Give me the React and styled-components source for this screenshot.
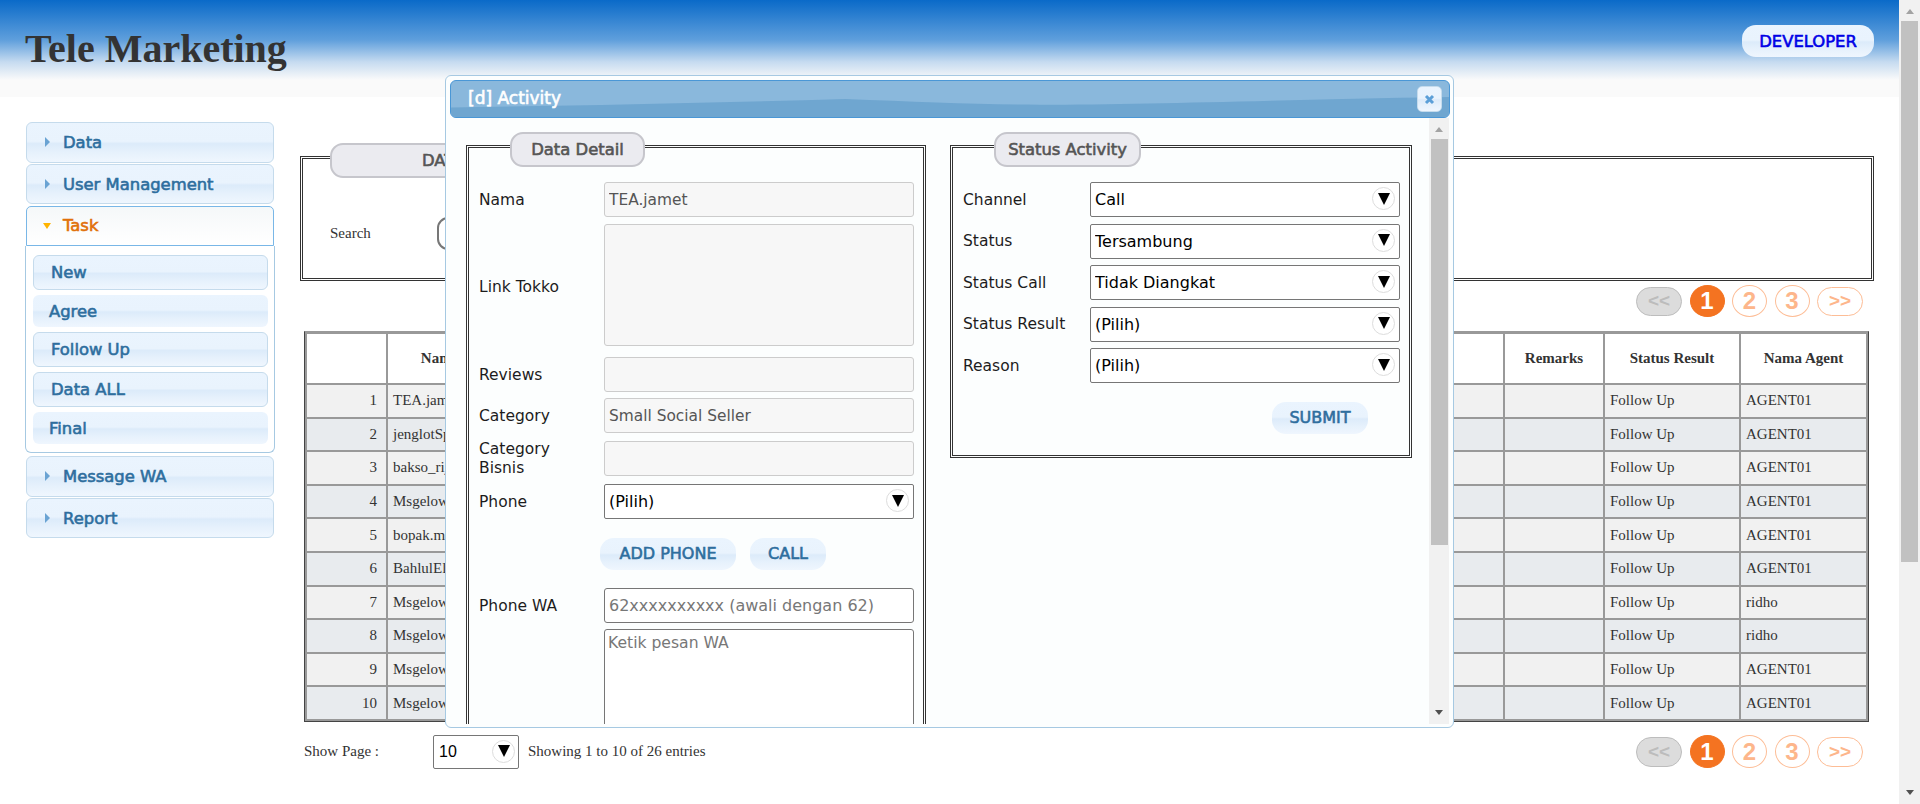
import React from "react";
import styled, { createGlobalStyle, css } from "styled-components";

const sans = `"DejaVu Sans", "Liberation Sans", sans-serif`;
const serif = `"Liberation Serif", serif`;
const blueGloss = `linear-gradient(#eaf4fe 0%, #e9f3fd 47%, #dcebfa 53%, #e6f1fc 75%, #eff6fe 100%)`;

const fauxBold = css`
  font-family: ${sans};
  font-weight: 400;
  -webkit-text-stroke: 0.6px currentColor;
`;

const Global = createGlobalStyle`
  html, body { margin: 0; padding: 0; height: 804px; overflow: hidden; background: #fff; }
  * { box-sizing: border-box; }
`;

const Viewport = styled.div`
  position: relative;
  display: flex;
  width: 1920px;
  height: 804px;
  overflow: hidden;
  font-family: ${serif};
  font-size: 15px;
  color: #333;
`;
const Page = styled.div`
  flex: 1;
  min-width: 0;
  height: 804px;
  overflow: hidden;
`;
const ScrollTrack = styled.div`
  width: ${(p) => p.$w}px;
  height: 100%;
  flex: none;
  display: flex;
  flex-direction: column;
  justify-content: space-between;
  background: #f1f1f1;
`;
const ScrollUpper = styled.div`
  display: flex;
  flex-direction: column;
`;
const ScrollButton = styled.div`
  height: 21px;
  display: flex;
  justify-content: center;
  align-items: ${(p) => (p.$down ? "flex-end" : "flex-start")};
  padding: ${(p) => (p.$down ? "0 0 9px" : "9px 0 0")};
`;
const ArrowUp = styled.span`
  width: 0;
  height: 0;
  border-left: 4.5px solid transparent;
  border-right: 4.5px solid transparent;
  border-bottom: 5px solid #a3a3a3;
`;
const ArrowDown = styled.span`
  width: 0;
  height: 0;
  border-left: 4.5px solid transparent;
  border-right: 4.5px solid transparent;
  border-top: 5px solid #505050;
`;
const ScrollThumb = styled.div`
  height: ${(p) => p.$h}px;
  margin: 0 ${(p) => p.$right}px 0 2px;
  background: #c1c1c1;
`;
const Scrollbar = ({ width, thumb, right }) => (
  <ScrollTrack $w={width}>
    <ScrollUpper>
      <ScrollButton><ArrowUp /></ScrollButton>
      <ScrollThumb $h={thumb} $right={right} />
    </ScrollUpper>
    <ScrollButton $down><ArrowDown /></ScrollButton>
  </ScrollTrack>
);

const Header = styled.header`
  height: 97px;
  display: flex;
  justify-content: space-between;
  align-items: flex-start;
  padding: 25px 25px 0;
  background: linear-gradient(#0a6ac8 0, #5f9fdc 40px, #c6dbf0 62px, #fafafa 80px, #fafafa 100%);
`;
const Title = styled.h1`
  margin: 1px 0 0;
  font: bold 40px/46px ${serif};
  color: #333;
`;
const GlossButton = styled.button`
  height: 32px;
  width: ${(p) => p.$w}px;
  padding: 0 0 ${(p) => (p.$flat ? 0 : 2)}px;
  border: 0;
  border-radius: 14px;
  background: ${blueGloss};
  ${fauxBold}
  font-size: ${(p) => p.$size || 16}px;
  color: ${(p) => p.$color || "#2e6e9e"};
  flex: none;
`;
const Main = styled.main`
  display: flex;
  align-items: flex-start;
  padding-left: 26px;
`;
const Sidebar = styled.nav`
  width: 248px;
  margin-top: 25px;
  flex: none;
`;
const AccHeader = styled.div`
  display: flex;
  align-items: center;
  height: 40.5px;
  margin-top: ${(p) => p.$top ?? 1.3}px;
  padding-left: ${(p) => (p.$active ? 16 : 18)}px;
  gap: ${(p) => (p.$active ? 12 : 13)}px;
  border: 1px solid ${(p) => (p.$active ? "#79b7e7" : "#c5dbec")};
  border-radius: ${(p) => (p.$active ? "5px 5px 0 0" : "6px")};
  background: ${(p) => (p.$active ? "linear-gradient(#f5f8f9, #fff)" : blueGloss)};
  ${fauxBold}
  font-size: 16.4px;
  color: ${(p) => (p.$active ? "#e17009" : "#2e6e9e")};
`;
const CaretRight = styled.span`
  width: 0;
  height: 0;
  border-left: 5px solid #6aa3d3;
  border-top: 5px solid transparent;
  border-bottom: 5px solid transparent;
`;
const CaretDown = styled.span`
  width: 0;
  height: 0;
  border-top: 6px solid #ffb400;
  border-left: 4.5px solid transparent;
  border-right: 4.5px solid transparent;
`;
const AccPanel = styled.div`
  width: 250px;
  height: 207px;
  margin-left: -1px;
  padding: 9px 6px 0 7px;
  display: flex;
  flex-direction: column;
  gap: 5px;
  border: 1px solid #a6c9e2;
  border-top: 0;
  border-radius: 0 0 6px 6px;
  background: #fff;
`;
const SubItem = styled.div`
  display: flex;
  align-items: center;
  height: ${(p) => (p.$plain ? 32 : 35)}px;
  padding-left: ${(p) => (p.$plain ? 16 : 17)}px;
  border: ${(p) => (p.$plain ? "0" : "1px solid #c5dbec")};
  border-radius: 6px;
  background: ${blueGloss};
  ${fauxBold}
  font-size: 16.4px;
  color: #2e6e9e;
`;
const Content = styled.section`
  width: 1574px;
  margin-left: 26px;
  margin-top: 59px;
`;
const Fieldset = styled.div`
  position: relative;
  border: 3px double #333;
  width: ${(p) => p.$w}px;
  height: ${(p) => p.$h}px;
  flex: none;
`;
const Legend = styled.div`
  position: absolute;
  top: -16px;
  left: ${(p) => p.$left}px;
  width: ${(p) => p.$w}px;
  height: 35px;
  display: flex;
  align-items: center;
  justify-content: center;
  border: 2px solid #c6c6cc;
  border-radius: 13px;
  background: #ebebf0;
  ${fauxBold}
  font-size: 16.4px;
  color: #555;
`;
const FilterLegend = styled(Legend)`
  justify-content: flex-start;
  padding-left: 90px;
`;
const SearchRow = styled.div`
  display: flex;
  align-items: center;
  padding: 58px 0 0 27px;
`;
const SearchLabel = styled.label`
  width: 107px;
  flex: none;
`;
const SearchInput = styled.input`
  width: 300px;
  height: 33px;
  border: 2px solid #777;
  border-radius: 11px;
  background: #fff;
`;
const PagerRow = styled.div`
  display: flex;
  justify-content: flex-end;
  align-items: center;
  height: 32px;
  margin-top: 4px;
  padding-right: 11px;
`;
const Pager = styled.div`
  display: flex;
  align-items: center;
  gap: 7.5px;
`;
const PageArrow = styled.span`
  width: 46px;
  height: ${(p) => p.$h}px;
  display: flex;
  align-items: center;
  justify-content: center;
  border: 1px solid ${(p) => (p.$disabled ? "#bdbdbd" : "#fdbd96")};
  border-radius: 15px;
  background: ${(p) => (p.$disabled ? "#dcdcdc" : "#fff")};
  color: ${(p) => (p.$disabled ? "#bcbcbc" : "#fdb68b")};
  font: bold 19px "Liberation Sans", sans-serif;
`;
const PageNum = styled.span`
  width: 35px;
  height: ${(p) => p.$h}px;
  display: flex;
  align-items: center;
  justify-content: center;
  border: 1px solid ${(p) => (p.$current ? "#f47321" : "#fdbd96")};
  border-radius: 50%;
  background: ${(p) => (p.$current ? "#f47321" : "#fff")};
  color: ${(p) => (p.$current ? "#fff" : "#fdb68b")};
  font: bold 24px "Liberation Sans", sans-serif;
`;
const TableFrame = styled.div`
  width: 1565px;
  margin: 14px 0 0 4px;
  border: 1px solid #444;
  border-top-color: #999;
`;
const Table = styled.table`
  width: 100%;
  table-layout: fixed;
  border-collapse: collapse;
`;
const Th = styled.th`
  height: 51px;
  border: 2px solid #999;
  background: #fff;
  font: bold 15px ${serif};
  color: #333;
  text-align: center;
  overflow: hidden;
  white-space: nowrap;
`;
const Td = styled.td`
  height: 33.6px;
  padding: 0 ${(p) => (p.$num ? 9 : 5)}px 0 5px;
  border: 2px solid #999;
  background: ${(p) => (p.$even ? "#e8ebee" : "#f1f1f1")};
  font: 15px ${serif};
  color: #333;
  text-align: ${(p) => (p.$num ? "right" : "left")};
  overflow: hidden;
  white-space: nowrap;
`;
const FooterBar = styled.div`
  display: flex;
  align-items: center;
  height: 34px;
  margin-top: 13px;
  padding: 0 11px 0 4px;
`;
const ShowLabel = styled.span`
  width: 129px;
  flex: none;
`;
const SelectWrap = styled.div`
  position: relative;
  width: ${(p) => p.$w}px;
  height: ${(p) => p.$h}px;
  flex: none;
`;
const Select = styled.select`
  width: 100%;
  height: 100%;
  padding: 0 0 0 4px;
  appearance: none;
  border: 1px solid #767676;
  border-radius: 2px;
  background: #fff;
  font: 16px ${sans};
  color: #000;
  outline: 0;
`;
const PageSizeSelect = styled(Select)`
  font: 16px "Liberation Sans", sans-serif;
  padding-left: 5px;
`;
const ArrowCircle = styled.span`
  position: absolute;
  top: 5px;
  right: ${(p) => p.$right}px;
  width: 23px;
  height: 23px;
  display: flex;
  align-items: center;
  justify-content: center;
  border: 1px solid #ddd;
  border-radius: 50%;
  background: #fff;
  pointer-events: none;
`;
const ShowingText = styled.span`
  margin-left: 9px;
  flex: 1;
`;
const Dialog = styled.div`
  position: absolute;
  top: 75px;
  left: 445px;
  width: 1009px;
  height: 653px;
  padding: 4px 3px 3px 4px;
  border: 1px solid #a6c9e2;
  border-radius: 6px;
  background: #fcfefe;
  font-family: ${sans};
`;
const TitleBar = styled.div`
  position: relative;
  height: 38px;
  display: flex;
  align-items: center;
  padding-left: 17px;
  border: 1px solid #4a97d6;
  border-radius: 6px;
  overflow: hidden;
  background: #8ab8dc;
  ${fauxBold}
  font-size: 17px;
  color: #fff;
`;
const Wave = styled.svg`
  position: absolute;
  inset: 0;
  width: 100%;
  height: 100%;
`;
const TitleText = styled.span`
  position: relative;
  margin-top: -3px;
`;
const CloseBtn = styled.button`
  position: absolute;
  top: 5px;
  right: 7px;
  width: 25px;
  height: 26px;
  padding: 0;
  display: flex;
  align-items: center;
  justify-content: center;
  border: 1px solid #c5dbec;
  border-radius: 5px;
  background: ${blueGloss};
`;
const DialogBody = styled.div`
  display: flex;
  width: 999px;
  height: 606px;
`;
const DialogClip = styled.div`
  flex: 1;
  min-width: 0;
  height: 606px;
  overflow: hidden;
`;
const DialogInner = styled.div`
  display: flex;
  align-items: flex-start;
  gap: 24px;
  padding: 27px 17px 0 16px;
`;
const FormPad = styled.div`
  padding: 34px 9px 0 10px;
  display: flex;
  flex-direction: column;
  gap: ${(p) => p.$gap || 0}px;
`;
const Row = styled.div`
  display: flex;
  align-items: center;
  margin-top: ${(p) => p.$top || 0}px;
`;
const Label = styled.label`
  width: ${(p) => p.$w || 125}px;
  flex: none;
  padding: ${(p) => p.$pt ?? 1}px 0 0;
  font: 15.5px/19px ${sans};
  color: #1c1c1c;
`;
const WrappedLabel = styled(Label)`
  padding: 0 30px 0 0;
  margin: -2px 0;
`;
const fieldBase = css`
  width: 310px;
  padding: 0 4px;
  border-radius: 3px;
  font: 15.4px ${sans};
  outline: 0;
  resize: none;
  display: block;
`;
const ReadInput = styled.input`
  ${fieldBase}
  height: 35px;
  border: 1px solid #ccc;
  background: #f7f7f7;
  color: #555;
`;
const ReadArea = styled.textarea`
  ${fieldBase}
  height: ${(p) => p.$h}px;
  border: 1px solid #ccc;
  background: #f7f7f7;
  color: #555;
`;
const TextInput = styled.input`
  ${fieldBase}
  height: 35px;
  border: 1px solid #767676;
  background: #fff;
  color: #000;
  font-size: 16px;
  &::placeholder { color: #777; }
`;
const TextArea = styled.textarea`
  ${fieldBase}
  height: 140px;
  padding: 4px 3px;
  border: 1px solid #767676;
  background: #fff;
  font-size: 15.6px;
  &::placeholder { color: #777; }
`;
const BtnRow = styled.div`
  display: flex;
  gap: 14px;
  margin-top: ${(p) => p.$top}px;
  padding-left: ${(p) => p.$left || 0}px;
  justify-content: ${(p) => (p.$end ? "flex-end" : "flex-start")};
  padding-right: ${(p) => p.$right || 0}px;
`;

const Chevron = () => (
  <svg width="12" height="12" viewBox="0 0 12 12" aria-hidden="true">
    <path d="M0 0 H12 L6 12 Z" fill="#000" />
  </svg>
);

const Dropdown = ({ value, w = 310, h = 35, right = 5, size }) => {
  const Field = size ? PageSizeSelect : Select;
  return (
    <SelectWrap $w={w} $h={h}>
      <Field defaultValue={value}>
        <option>{value}</option>
      </Field>
      <ArrowCircle $right={right}>
        <Chevron />
      </ArrowCircle>
    </SelectWrap>
  );
};

const Pagination = ({ big }) => (
  <Pager>
    <PageArrow $disabled $h={big ? 30 : 29}>{"<<"}</PageArrow>
    <PageNum $current $h={big ? 33 : 32}>1</PageNum>
    <PageNum $h={big ? 33 : 32}>2</PageNum>
    <PageNum $h={big ? 33 : 32}>3</PageNum>
    <PageArrow $h={big ? 30 : 29}>{">>"}</PageArrow>
  </Pager>
);

const rows = [
  ["TEA.jamet", "Follow Up", "AGENT01"],
  ["jenglotSpesial", "Follow Up", "AGENT01"],
  ["bakso_rijal", "Follow Up", "AGENT01"],
  ["Msgelow", "Follow Up", "AGENT01"],
  ["bopak.m", "Follow Up", "AGENT01"],
  ["BahlulElectric", "Follow Up", "AGENT01"],
  ["Msgelow", "Follow Up", "ridho"],
  ["Msgelow", "Follow Up", "ridho"],
  ["Msgelow", "Follow Up", "AGENT01"],
  ["Msgelow", "Follow Up", "AGENT01"],
];

const statusFields = [
  ["Channel", "Call"],
  ["Status", "Tersambung"],
  ["Status Call", "Tidak Diangkat"],
  ["Status Result", "(Pilih)"],
  ["Reason", "(Pilih)"],
];

export default function App() {
  return (
    <>
      <Global />
      <Viewport>
        <Page>
          <Header>
            <Title>Tele Marketing</Title>
            <GlossButton $w={132} $size={16.4} $color="#0000e6" $flat>DEVELOPER</GlossButton>
          </Header>
          <Main>
            <Sidebar>
              <AccHeader $top={0}><CaretRight />Data</AccHeader>
              <AccHeader><CaretRight />User Management</AccHeader>
              <AccHeader $active><CaretDown />Task</AccHeader>
              <AccPanel>
                <SubItem>New</SubItem>
                <SubItem $plain>Agree</SubItem>
                <SubItem>Follow Up</SubItem>
                <SubItem>Data ALL</SubItem>
                <SubItem $plain>Final</SubItem>
              </AccPanel>
              <AccHeader $top={3}><CaretRight />Message WA</AccHeader>
              <AccHeader><CaretRight />Report</AccHeader>
            </Sidebar>
            <Content>
              <Fieldset $w={1574} $h={125}>
                <FilterLegend $left={27} $w={400}>DATA</FilterLegend>
                <SearchRow>
                  <SearchLabel>Search</SearchLabel>
                  <SearchInput />
                </SearchRow>
              </Fieldset>
              <PagerRow>
                <Pagination />
              </PagerRow>
              <TableFrame>
                <Table>
                  <colgroup>
                    <col style={{ width: 81 }} />
                    <col style={{ width: 106 }} />
                    <col />
                    <col style={{ width: 100 }} />
                    <col style={{ width: 136 }} />
                    <col style={{ width: 127 }} />
                  </colgroup>
                  <thead>
                    <tr>
                      <Th />
                      <Th>Nama</Th>
                      <Th />
                      <Th>Remarks</Th>
                      <Th>Status Result</Th>
                      <Th>Nama Agent</Th>
                    </tr>
                  </thead>
                  <tbody>
                    {rows.map((r, i) => (
                      <tr key={i}>
                        <Td $even={i % 2 === 1} $num>{i + 1}</Td>
                        <Td $even={i % 2 === 1}>{r[0]}</Td>
                        <Td $even={i % 2 === 1} />
                        <Td $even={i % 2 === 1} />
                        <Td $even={i % 2 === 1}>{r[1]}</Td>
                        <Td $even={i % 2 === 1}>{r[2]}</Td>
                      </tr>
                    ))}
                  </tbody>
                </Table>
              </TableFrame>
              <FooterBar>
                <ShowLabel>Show Page :</ShowLabel>
                <Dropdown value="10" w={86} h={34} right={4} size />
                <ShowingText>Showing 1 to 10 of 26 entries</ShowingText>
                <Pagination big />
              </FooterBar>
            </Content>
          </Main>
        </Page>
        <Scrollbar width={21} thumb={541} right={2} />

        <Dialog>
          <TitleBar>
            <Wave viewBox="0 0 1000 38" preserveAspectRatio="none" aria-hidden="true">
              <path d="M0 28 C120 26 260 23 395 19 C470 22 530 25 590 25 C700 25 820 20 1000 17 V38 H0 Z" fill="#6fa6d0" />
            </Wave>
            <TitleText>[d] Activity</TitleText>
            <CloseBtn aria-label="Close">
              <svg width="11" height="11" viewBox="0 0 11 11" aria-hidden="true">
                <path d="M2 2 L9 9 M9 2 L2 9" stroke="#5b9fd8" strokeWidth="3" />
              </svg>
            </CloseBtn>
          </TitleBar>
          <DialogBody>
            <DialogClip>
              <DialogInner>
                <Fieldset $w={460} $h={790}>
                  <Legend $left={41} $w={135}>Data Detail</Legend>
                  <FormPad>
                    <Row><Label>Nama</Label><ReadInput readOnly value="TEA.jamet" /></Row>
                    <Row $top={7}><Label $pt={5}>Link Tokko</Label><ReadArea readOnly $h={122} /></Row>
                    <Row $top={11}><Label>Reviews</Label><ReadInput readOnly /></Row>
                    <Row $top={6}><Label>Category</Label><ReadInput readOnly value="Small Social Seller" /></Row>
                    <Row $top={8}><WrappedLabel>Category Bisnis</WrappedLabel><ReadInput readOnly /></Row>
                    <Row $top={8}><Label>Phone</Label><Dropdown value="(Pilih)" /></Row>
                    <BtnRow $left={121} $top={19}>
                      <GlossButton $w={136}>ADD PHONE</GlossButton>
                      <GlossButton $w={76}>CALL</GlossButton>
                    </BtnRow>
                    <Row $top={18}><Label>Phone WA</Label><TextInput placeholder="62xxxxxxxxxx (awali dengan 62)" /></Row>
                    <Row $top={6}><Label /><TextArea placeholder="Ketik pesan WA" /></Row>
                  </FormPad>
                </Fieldset>
                <Fieldset $w={462} $h={313}>
                  <Legend $left={41} $w={147}>Status Activity</Legend>
                  <FormPad $gap={6.5}>
                    {statusFields.map(([label, value]) => (
                      <Row key={label}><Label $w={127}>{label}</Label><Dropdown value={value} /></Row>
                    ))}
                    <BtnRow $end $right={32} $top={12.5}>
                      <GlossButton $w={96}>SUBMIT</GlossButton>
                    </BtnRow>
                  </FormPad>
                </Fieldset>
              </DialogInner>
            </DialogClip>
            <Scrollbar width={20} thumb={406} right={1} />
          </DialogBody>
        </Dialog>
      </Viewport>
    </>
  );
}
